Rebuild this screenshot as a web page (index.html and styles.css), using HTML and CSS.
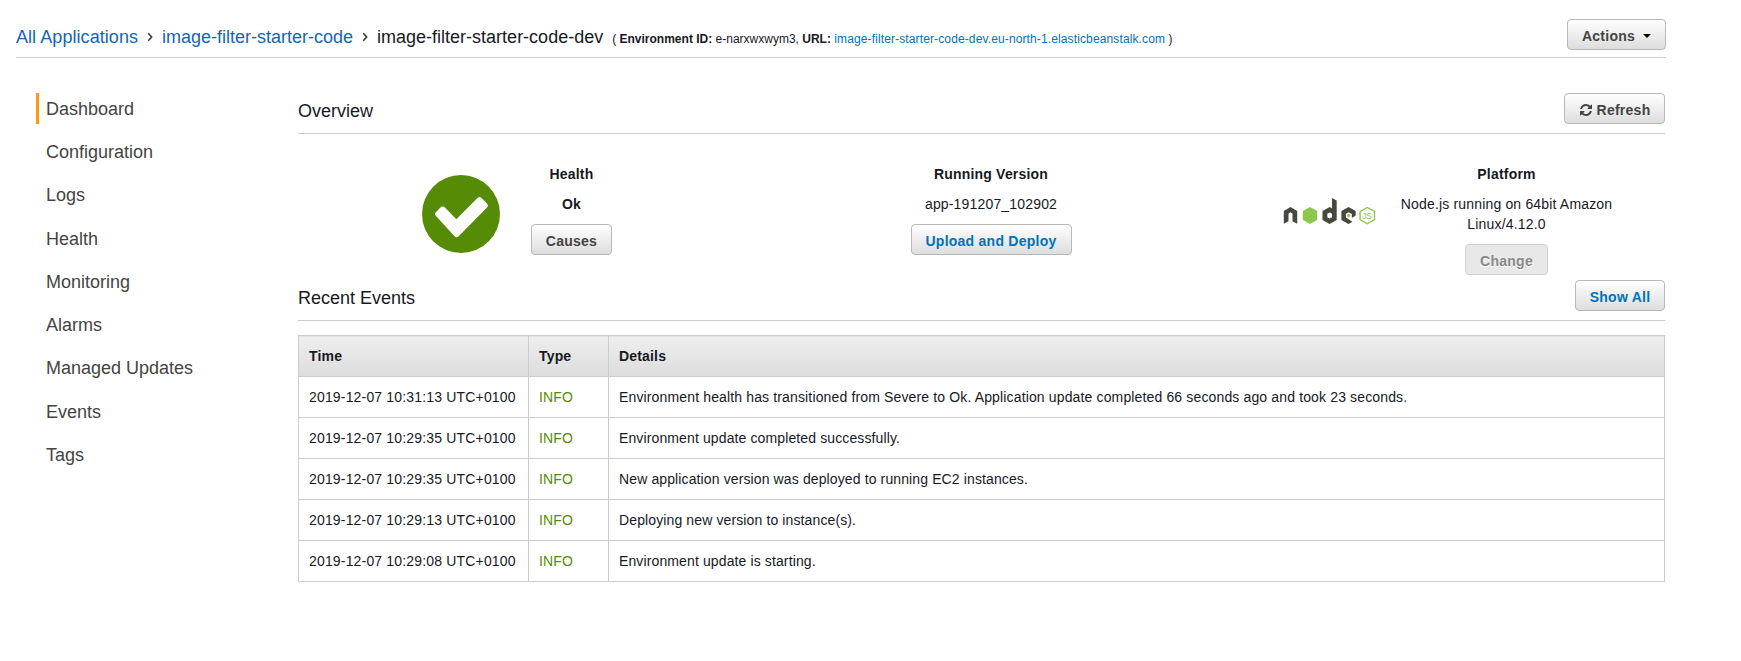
FILE: index.html
```html
<!DOCTYPE html>
<html lang="en">
<head>
<meta charset="utf-8">
<title>image-filter-starter-code-dev</title>
<link rel="stylesheet" href="styles.css">
</head>
<body>
<header class="topbar">
  <nav class="crumbs">
    <a href="#">All Applications</a><svg class="sep" viewBox="0 0 24 12"><path d="M10.300 2.200 13.700 6 10.300 9.800"/></svg><a href="#">image-filter-starter-code</a><svg class="sep" viewBox="0 0 24 12"><path d="M10.300 2.200 13.700 6 10.300 9.800"/></svg><span class="current">image-filter-starter-code-dev</span>
    <span class="env">( <b>Environment ID:</b> e-narxwxwym3, <b>URL:</b> <a href="#">image-filter-starter-code-dev.eu-north-1.elasticbeanstalk.com</a> )</span>
  </nav>
  <button class="btn actions">Actions<span class="caret"></span></button>
</header>
<div class="layout">
  <ul class="sidebar">
    <li class="active">Dashboard</li>
    <li>Configuration</li>
    <li>Logs</li>
    <li>Health</li>
    <li>Monitoring</li>
    <li>Alarms</li>
    <li>Managed Updates</li>
    <li>Events</li>
    <li>Tags</li>
  </ul>
  <main class="main">
    <div class="section-head">
      <h2>Overview</h2>
      <button class="btn refresh"><svg class="icon" viewBox="0 0 1536 1536"><path d="M1511 928q0 5-1 7-64 268-268 434.5t-478 166.5q-146 0-282.5-55t-243.5-157l-129 129q-19 19-45 19t-45-19-19-45v-448q0-26 19-45t45-19h448q26 0 45 19t19 45-19 45l-137 137q71 66 161 102t187 36q134 0 250-65t186-179q11-17 53-117 8-23 30-23h192q13 0 22.500 9.500t9.500 22.500zm25-800v448q0 26-19 45t-45 19h-448q-26 0-45-19t-19-45 19-45l138-138q-148-137-349-137-134 0-250 65t-186 179q-11 17-53 117-8 23-30 23h-199q-13 0-22.500-9.500t-9.500-22.500v-7q65-268 270-434.500t480-166.500q146 0 284 55.500t245 156.500l130-129q19-19 45-19t45 19 19 45z"/></svg>Refresh</button>
    </div>
    <div class="overview">
      <div class="health">
        <svg class="check" viewBox="0 0 78 78"><circle cx="39" cy="39" r="39" fill="#558b05"/><path d="M18.500 32.500 14 37a2.800 2.800 0 0 0 0 4L32.500 61.200a3 3 0 0 0 4.200 0L65 32.500a3 3 0 0 0 0-4L59.500 23a3 3 0 0 0-4 0L34.300 44.300 23 32.500a3 3 0 0 0-4.500 0z" fill="#fff"/></svg>
        <div class="card health-card">
          <h3>Health</h3>
          <p><b>Ok</b></p>
          <button class="btn causes">Causes</button>
        </div>
      </div>
      <div class="card version">
        <h3>Running Version</h3>
        <p>app-191207_102902</p>
        <button class="btn link deploy">Upload and Deploy</button>
      </div>
      <div class="platform">
        <svg class="node" viewBox="0 0 93 27">
          <g fill="#46483e">
            <path d="M.8 13 7.500 9 14.200 13V25.800L9.500 23.300V15.500L7.500 14.300 5.500 15.500V23.300L.8 25.800z"/>
            <path fill-rule="evenodd" d="M49 0 53.700 2.500V22L46.600 26 39.500 22V13L46.600 9 49 10.400zM46.600 14.500 44.300 15.800V19.300L46.600 20.600 49 19.300V15.800z"/>
            <path d="M65.500 9 72.700 13V17.500L68.800 20V16L65.500 14.300 62.900 15.800V19.500L69.500 23.700 65.500 26 58.400 22V13z"/>
          </g>
          <path d="M27 9 34.200 13V22L27 26 19.800 22V13z" fill="#8cc84b"/>
          <circle cx="65.700" cy="17.500" r="1.600" fill="#8cc84b"/>
          <path d="M84.300 9.500 91.500 13.500V21.700L84.300 25.800 77.100 21.700V13.500z" fill="none" stroke="#8cc84b" stroke-width="1.400"/>
          <text x="79.300" y="21" class="js">JS</text>
        </svg>
        <div class="card platform-card">
          <h3>Platform</h3>
          <p>Node.js running on 64bit Amazon Linux/4.12.0</p>
          <button class="btn change" disabled>Change</button>
        </div>
      </div>
    </div>
    <div class="section-head events-head">
      <h2>Recent Events</h2>
      <button class="btn link show">Show All</button>
    </div>
    <table class="events">
      <thead><tr><th class="time">Time</th><th class="type">Type</th><th>Details</th></tr></thead>
      <tbody>
        <tr><td>2019-12-07 10:31:13 UTC+0100</td><td class="info">INFO</td><td class="details">Environment health has transitioned from Severe to Ok. Application update completed 66 seconds ago and took 23 seconds.</td></tr>
        <tr><td>2019-12-07 10:29:35 UTC+0100</td><td class="info">INFO</td><td class="details">Environment update completed successfully.</td></tr>
        <tr><td>2019-12-07 10:29:35 UTC+0100</td><td class="info">INFO</td><td class="details">New application version was deployed to running EC2 instances.</td></tr>
        <tr><td>2019-12-07 10:29:13 UTC+0100</td><td class="info">INFO</td><td class="details">Deploying new version to instance(s).</td></tr>
        <tr><td>2019-12-07 10:29:08 UTC+0100</td><td class="info">INFO</td><td class="details">Environment update is starting.</td></tr>
      </tbody>
    </table>
  </main>
</div>
</body>
</html>
```
FILE: styles.css
```css
* { box-sizing: border-box; }
body { margin: 0; background: #fff; color: #16191f; font: 14px/20px "Liberation Sans", Arial, sans-serif; }
a { color: #1166bb; text-decoration: none; }
h2, h3, p, ul { margin: 0; padding: 0; }

.topbar { margin-left: 16px; width: 1650px; height: 58px; border-bottom: 1px solid #ccc; display: flex; justify-content: space-between; align-items: flex-start; padding-top: 19px; }
.crumbs { font-size: 18px; line-height: 24px; padding-top: 6px; white-space: nowrap; }
.crumbs > a:first-child { letter-spacing: 0.06px; }
.sep { width: 24px; height: 12px; fill: none; stroke: #333; stroke-width: 1.5; }
.env { font-size: 12px; margin-left: 4px; }
.env a { color: #0073bb; letter-spacing: 0.125px; }

.btn { height: 31px; border: 1px solid #b8b8b8; border-radius: 4px; background: linear-gradient(#fff, #ddd); color: #444; font: bold 14px/20px "Liberation Sans", Arial, sans-serif; letter-spacing: 0.25px; padding: 3px 0 0; display: inline-flex; align-items: center; justify-content: center; white-space: nowrap; }
.btn.link { color: #0073bb; }
.btn:disabled { background: #e8e8e8; border-color: #d2d2d2; color: #888; text-shadow: 0 1px 1px #fff; }
.actions { width: 99px; }
.refresh { width: 101px; }
.causes { width: 81px; }
.deploy { width: 161px; }
.change { width: 83px; }
.show { width: 90px; }
.caret { border: 4px solid transparent; border-top-color: #000; border-bottom: 0; margin-left: 8px; }
.icon { width: 12px; height: 12px; fill: #444; margin: 0 5px 0 1px; }

.layout { display: flex; padding: 35px 0 0 36px; }
.sidebar { list-style: none; width: 262px; font-size: 18px; line-height: 33px; color: #444; }
.sidebar li { height: 31px; margin-bottom: 12.22px; padding-left: 7px; border-left: 3px solid transparent; }
.sidebar .active { border-left-color: #ff9914; }

.main { width: 1367px; }
.section-head { height: 41px; border-bottom: 1px solid #ccc; display: flex; justify-content: space-between; align-items: flex-start; }
h2 { font-size: 18px; font-weight: normal; line-height: 24px; padding-top: 6px; }

.overview { display: grid; grid-template-columns: 483px 420px 464px; height: 146px; padding-top: 30px; }
.card { text-align: center; }
h3 { font-size: 14px; line-height: 20px; margin-bottom: 10px; letter-spacing: 0.2px; }
.card p { margin-bottom: 10px; letter-spacing: 0.17px; }
.health { display: flex; padding-left: 124px; gap: 31px; }
.check { width: 78px; height: 78px; margin-top: 11px; }
.platform { display: flex; padding-left: 82px; gap: 12px; }
.node { width: 93px; height: 27px; margin-top: 34px; }
.js { font: 8.5px "Liberation Sans", Arial, sans-serif; letter-spacing: -0.3px; fill: #8cc84b; }
.platform-card { width: 237px; }

.events { width: 1367px; margin-top: 14px; border-collapse: collapse; table-layout: fixed; }
.events th, .events td { height: 41px; padding: 0 10px; border: 1px solid #ccc; text-align: left; white-space: nowrap; letter-spacing: 0.17px; }
.events th { background: linear-gradient(#eee, #ddd); }
.events .details { letter-spacing: 0.12px; }
.events tr:first-child .details { letter-spacing: 0.143px; }
.time { width: 230px; }
.type { width: 80px; }
.events .info { color: #558b05; }
```
